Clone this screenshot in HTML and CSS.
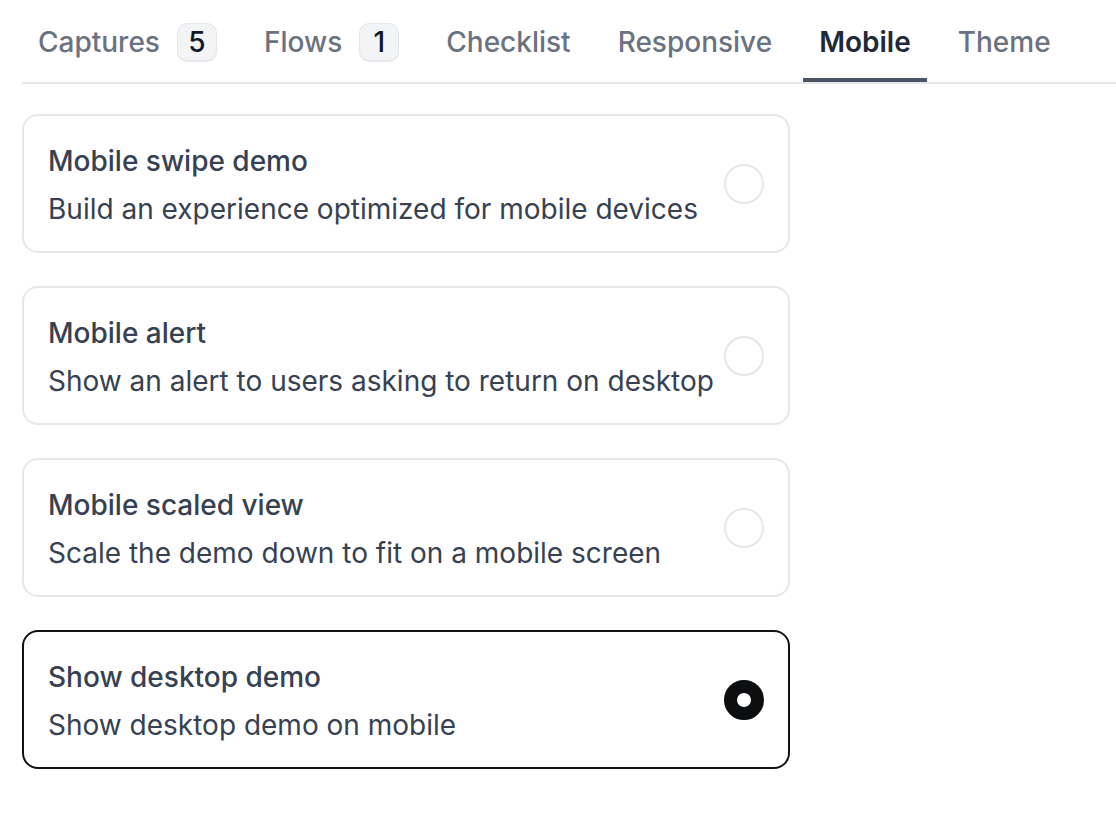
FILE: index.html
```html
<!DOCTYPE html>
<html lang="en">
<head>
<meta charset="utf-8">
<title>Mobile settings</title>
<link rel="stylesheet" href="styles.css">
</head>
<body>
<div class="page">
  <nav class="tabs">
    <a class="tab">Captures<span class="badge">5</span></a>
    <a class="tab">Flows<span class="badge">1</span></a>
    <a class="tab">Checklist</a>
    <a class="tab">Responsive</a>
    <a class="tab active">Mobile</a>
    <a class="tab">Theme</a>
  </nav>
  <div class="options">
    <label class="card">
      <div class="card-text">
        <div class="card-title">Mobile swipe demo</div>
        <div class="card-desc">Build an experience optimized for mobile devices</div>
      </div>
      <span class="radio"></span>
    </label>
    <label class="card">
      <div class="card-text">
        <div class="card-title">Mobile alert</div>
        <div class="card-desc">Show an alert to users asking to return on desktop</div>
      </div>
      <span class="radio"></span>
    </label>
    <label class="card">
      <div class="card-text">
        <div class="card-title">Mobile scaled view</div>
        <div class="card-desc">Scale the demo down to fit on a mobile screen</div>
      </div>
      <span class="radio"></span>
    </label>
    <label class="card selected">
      <div class="card-text">
        <div class="card-title">Show desktop demo</div>
        <div class="card-desc">Show desktop demo on mobile</div>
      </div>
      <span class="radio checked"></span>
    </label>
  </div>
</div>
</body>
</html>
```
FILE: styles.css
```css
* { box-sizing: border-box; }
html, body { margin: 0; padding: 0; background: #fff; }
body {
  font-family: Inter, "Noto Sans", "Liberation Sans", sans-serif;
  color: #374151;
}
.page {
  padding-left: 22px;
}
.tabs {
  display: flex;
  gap: 15px;
  border-bottom: 2px solid #e5e7eb;
}
.tab {
  display: flex;
  align-items: center;
  padding: 22px 16px 15px;
  border-bottom: 4px solid transparent;
  font-size: 28px;
  line-height: 41px;
  font-weight: 450;
  color: #6b7280;
  white-space: nowrap;
  cursor: pointer;
}
.tab.active {
  color: #1f2937;
  font-weight: 600;
  border-bottom-color: #4b5563;
}
.badge {
  display: inline-flex;
  align-items: center;
  justify-content: center;
  margin-left: 17px;
  height: 39px;
  min-width: 40px;
  padding: 0 10px;
  border: 1px solid #e5e7eb;
  border-bottom-width: 2px;
  border-radius: 10px;
  background: #f3f4f6;
  color: #111827;
  font-size: 28px;
  font-weight: 500;
}
.options {
  display: flex;
  flex-direction: column;
  gap: 33px;
  width: 768px;
  padding-top: 30px;
}
.card {
  display: flex;
  align-items: center;
  justify-content: space-between;
  height: 139px;
  padding: 0 24px;
  border: 2px solid #e5e7eb;
  border-radius: 16px;
  background: #fff;
  cursor: pointer;
}
.card.selected {
  border-color: #111214;
}
.card-text {
  display: flex;
  flex-direction: column;
  gap: 8px;
  margin-top: 3px;
}
.card-title {
  font-size: 28px;
  line-height: 40px;
  font-weight: 500;
  color: #374151;
}
.card-desc {
  font-size: 28px;
  line-height: 40px;
  font-weight: 400;
  color: #374151;
}
.radio {
  flex: none;
  width: 40px;
  height: 40px;
  border-radius: 50%;
  border: 2px solid #e5e7eb;
  background: #fff;
}
.radio.checked {
  border: 13px solid #0d0e10;
  background: #fff;
}
```
